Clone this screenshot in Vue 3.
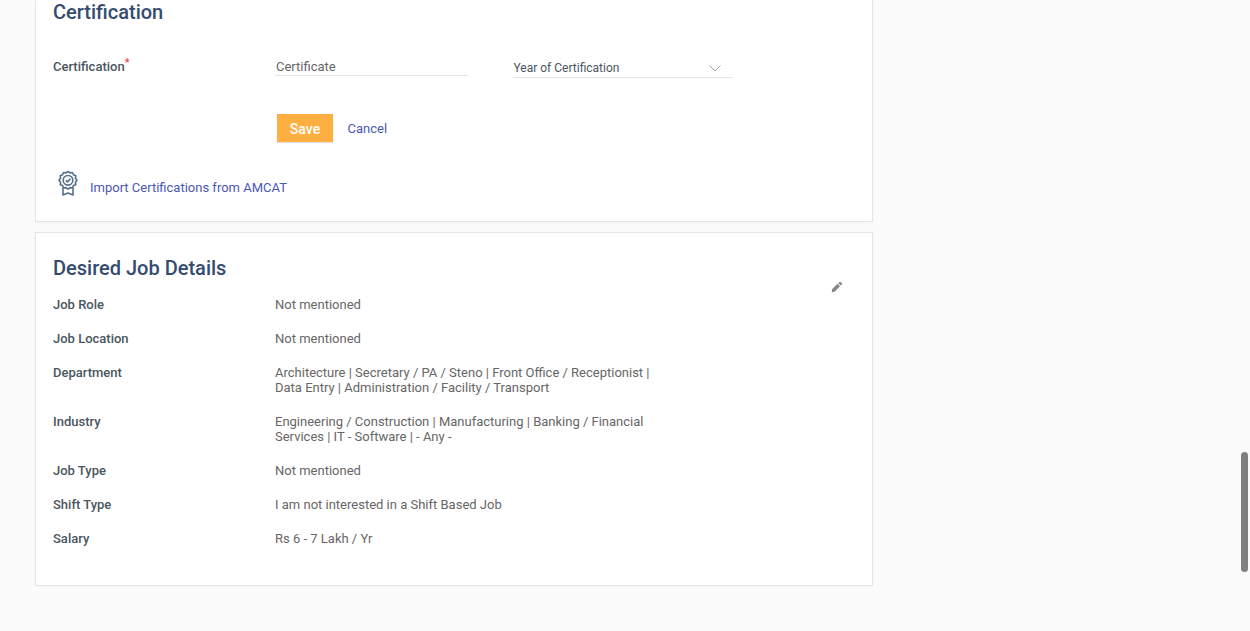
<script setup>
const details = [
  { label: 'Job Role', lines: ['Not mentioned'] },
  { label: 'Job Location', lines: ['Not mentioned'] },
  {
    label: 'Department',
    lines: [
      'Architecture | Secretary / PA / Steno | Front Office / Receptionist |',
      'Data Entry | Administration / Facility / Transport',
    ],
  },
  {
    label: 'Industry',
    lines: [
      'Engineering / Construction | Manufacturing | Banking / Financial',
      'Services | IT - Software | - Any -',
    ],
  },
  { label: 'Job Type', lines: ['Not mentioned'] },
  { label: 'Shift Type', lines: ['I am not interested in a Shift Based Job'] },
  { label: 'Salary', lines: ['Rs 6 - 7 Lakh / Yr'] },
]
</script>

<template>
  <div class="page">
    <main class="column">
      <section class="card cert">
        <h2>Certification</h2>
        <div class="form-row">
          <label class="label">Certification<span class="req">*</span></label>
          <div class="field name-field"><span>Certificate</span></div>
          <div class="field year-field">
            <span>Year of Certification</span>
            <svg class="chevron" width="12" height="7" viewBox="0 0 12 7">
              <path d="M0.5 0.5 L6 6 L11.5 0.5" fill="none" stroke="#999" stroke-width="0.9" />
            </svg>
          </div>
        </div>
        <div class="actions">
          <button type="button" class="save">Save</button>
          <a class="link cancel">Cancel</a>
        </div>
        <div class="import">
          <svg width="20" height="26" viewBox="0 0 20 26" fill="none" stroke="#55708a" stroke-width="1.6" stroke-linejoin="round">
            <path d="M10 1.5 L12 2.9 L14.5 2.5 L15.4 4.8 L17.8 5.7 L17.4 8.2 L19 10.3 L17.4 12.3 L17.8 14.8 L15.4 15.6 L14.5 18 L12 17.6 L10 19.1 L8 17.6 L5.5 18 L4.6 15.6 L2.2 14.8 L2.6 12.3 L1 10.3 L2.6 8.2 L2.2 5.7 L4.6 4.8 L5.5 2.5 L8 2.9 Z" />
            <circle cx="10" cy="10.3" r="4.8" />
            <path d="M7.8 10.3 L9.5 11.9 L12.4 8.7" />
            <path d="M5 17.8 V25 L10 23 L15 25 V17.8" />
          </svg>
          <a class="link">Import Certifications from AMCAT</a>
        </div>
      </section>

      <section class="card desired">
        <h2>Desired Job Details</h2>
        <svg class="edit" width="12" height="12" viewBox="0 0 12 12">
          <path d="M1 8.3 L6.5 2.8 L9 5.3 L3.6 10.8 L0.8 11.2 Z M7.2 2.2 L8.5 1 Q9.2 0.6 9.9 1.2 L10.8 2.1 Q11.4 2.8 10.8 3.4 L9.7 4.6 Z" fill="#85878a" />
        </svg>
        <dl>
          <div v-for="d in details" :key="d.label" class="detail">
            <dt class="label">{{ d.label }}</dt>
            <dd><div v-for="l in d.lines" :key="l">{{ l }}</div></dd>
          </div>
        </dl>
      </section>
    </main>
    <div class="scroll-thumb"></div>
  </div>
</template>

<style>
body {
  background: #fbfbfb;
  overflow: hidden;
}
</style>

<style scoped>
.page {
  position: relative;
  height: 631px;
  overflow: hidden;
  background: #fbfbfb;
  font-family: Roboto, "Liberation Sans", sans-serif;
  font-size: 13px;
  line-height: 15px;
  color: #666;
}
.column {
  display: flex;
  flex-direction: column;
  gap: 10px;
  width: 838px;
  margin-left: 35px;
}
.card {
  position: relative;
  box-sizing: border-box;
  padding: 0 17px;
  background: #fff;
  border: 1px solid #e4e5e6;
  box-shadow: 0 1px 3px rgba(0, 0, 0, 0.03);
}
.cert {
  height: 222px;
  border-top: 0;
}
.desired {
  height: 354px;
  padding-top: 23px;
}
h2 {
  margin: 0;
  font-size: 20px;
  line-height: 24px;
  font-weight: 500;
  color: #344b70;
}
.label {
  width: 222px;
  flex: none;
  font-weight: 500;
  color: #4a565f;
}
.req {
  display: inline-block;
  color: #f03a50;
  font-size: 11px;
  line-height: 10px;
  transform: translateY(-5px);
}
.form-row {
  display: flex;
  height: 19px;
  margin-top: 35px;
}
.field {
  box-sizing: border-box;
  border-bottom: 1px solid #e4e5e6;
}
.name-field {
  width: 193px;
  height: 17px;
  padding-left: 1px;
}
.year-field {
  display: flex;
  justify-content: space-between;
  width: 220px;
  height: 19px;
  margin-left: 45px;
  padding: 2px 12px 0 0.5px;
  font-size: 12px;
  color: #4a565f;
}
.chevron {
  margin-top: 4px;
}
.actions {
  display: flex;
  align-items: center;
  margin: 36px 0 0 224px;
}
.save {
  width: 56px;
  height: 28px;
  padding: 1px 0 0;
  border: 0;
  background: #ffae42;
  box-shadow: 0 1px 1px rgba(0, 0, 0, 0.12);
  color: #fff;
  font: 500 14px/16px Roboto, "Liberation Sans", sans-serif;
}
.link {
  color: #4b57b5;
}
.cancel {
  margin-left: 14.5px;
}
.import {
  display: flex;
  align-items: center;
  gap: 12px;
  margin: 28px 0 0 5px;
}
.import .link {
  padding-top: 8px;
}
.edit {
  position: absolute;
  top: 48px;
  right: 29px;
}
dl {
  display: flex;
  flex-direction: column;
  gap: 19px;
  margin: 17px 0 0;
}
.detail {
  display: flex;
}
dd {
  margin: 0;
  white-space: nowrap;
}
.scroll-thumb {
  position: absolute;
  top: 452px;
  right: 2px;
  width: 7px;
  height: 120px;
  border-radius: 4px;
  background: #7f7f7f;
}
</style>
